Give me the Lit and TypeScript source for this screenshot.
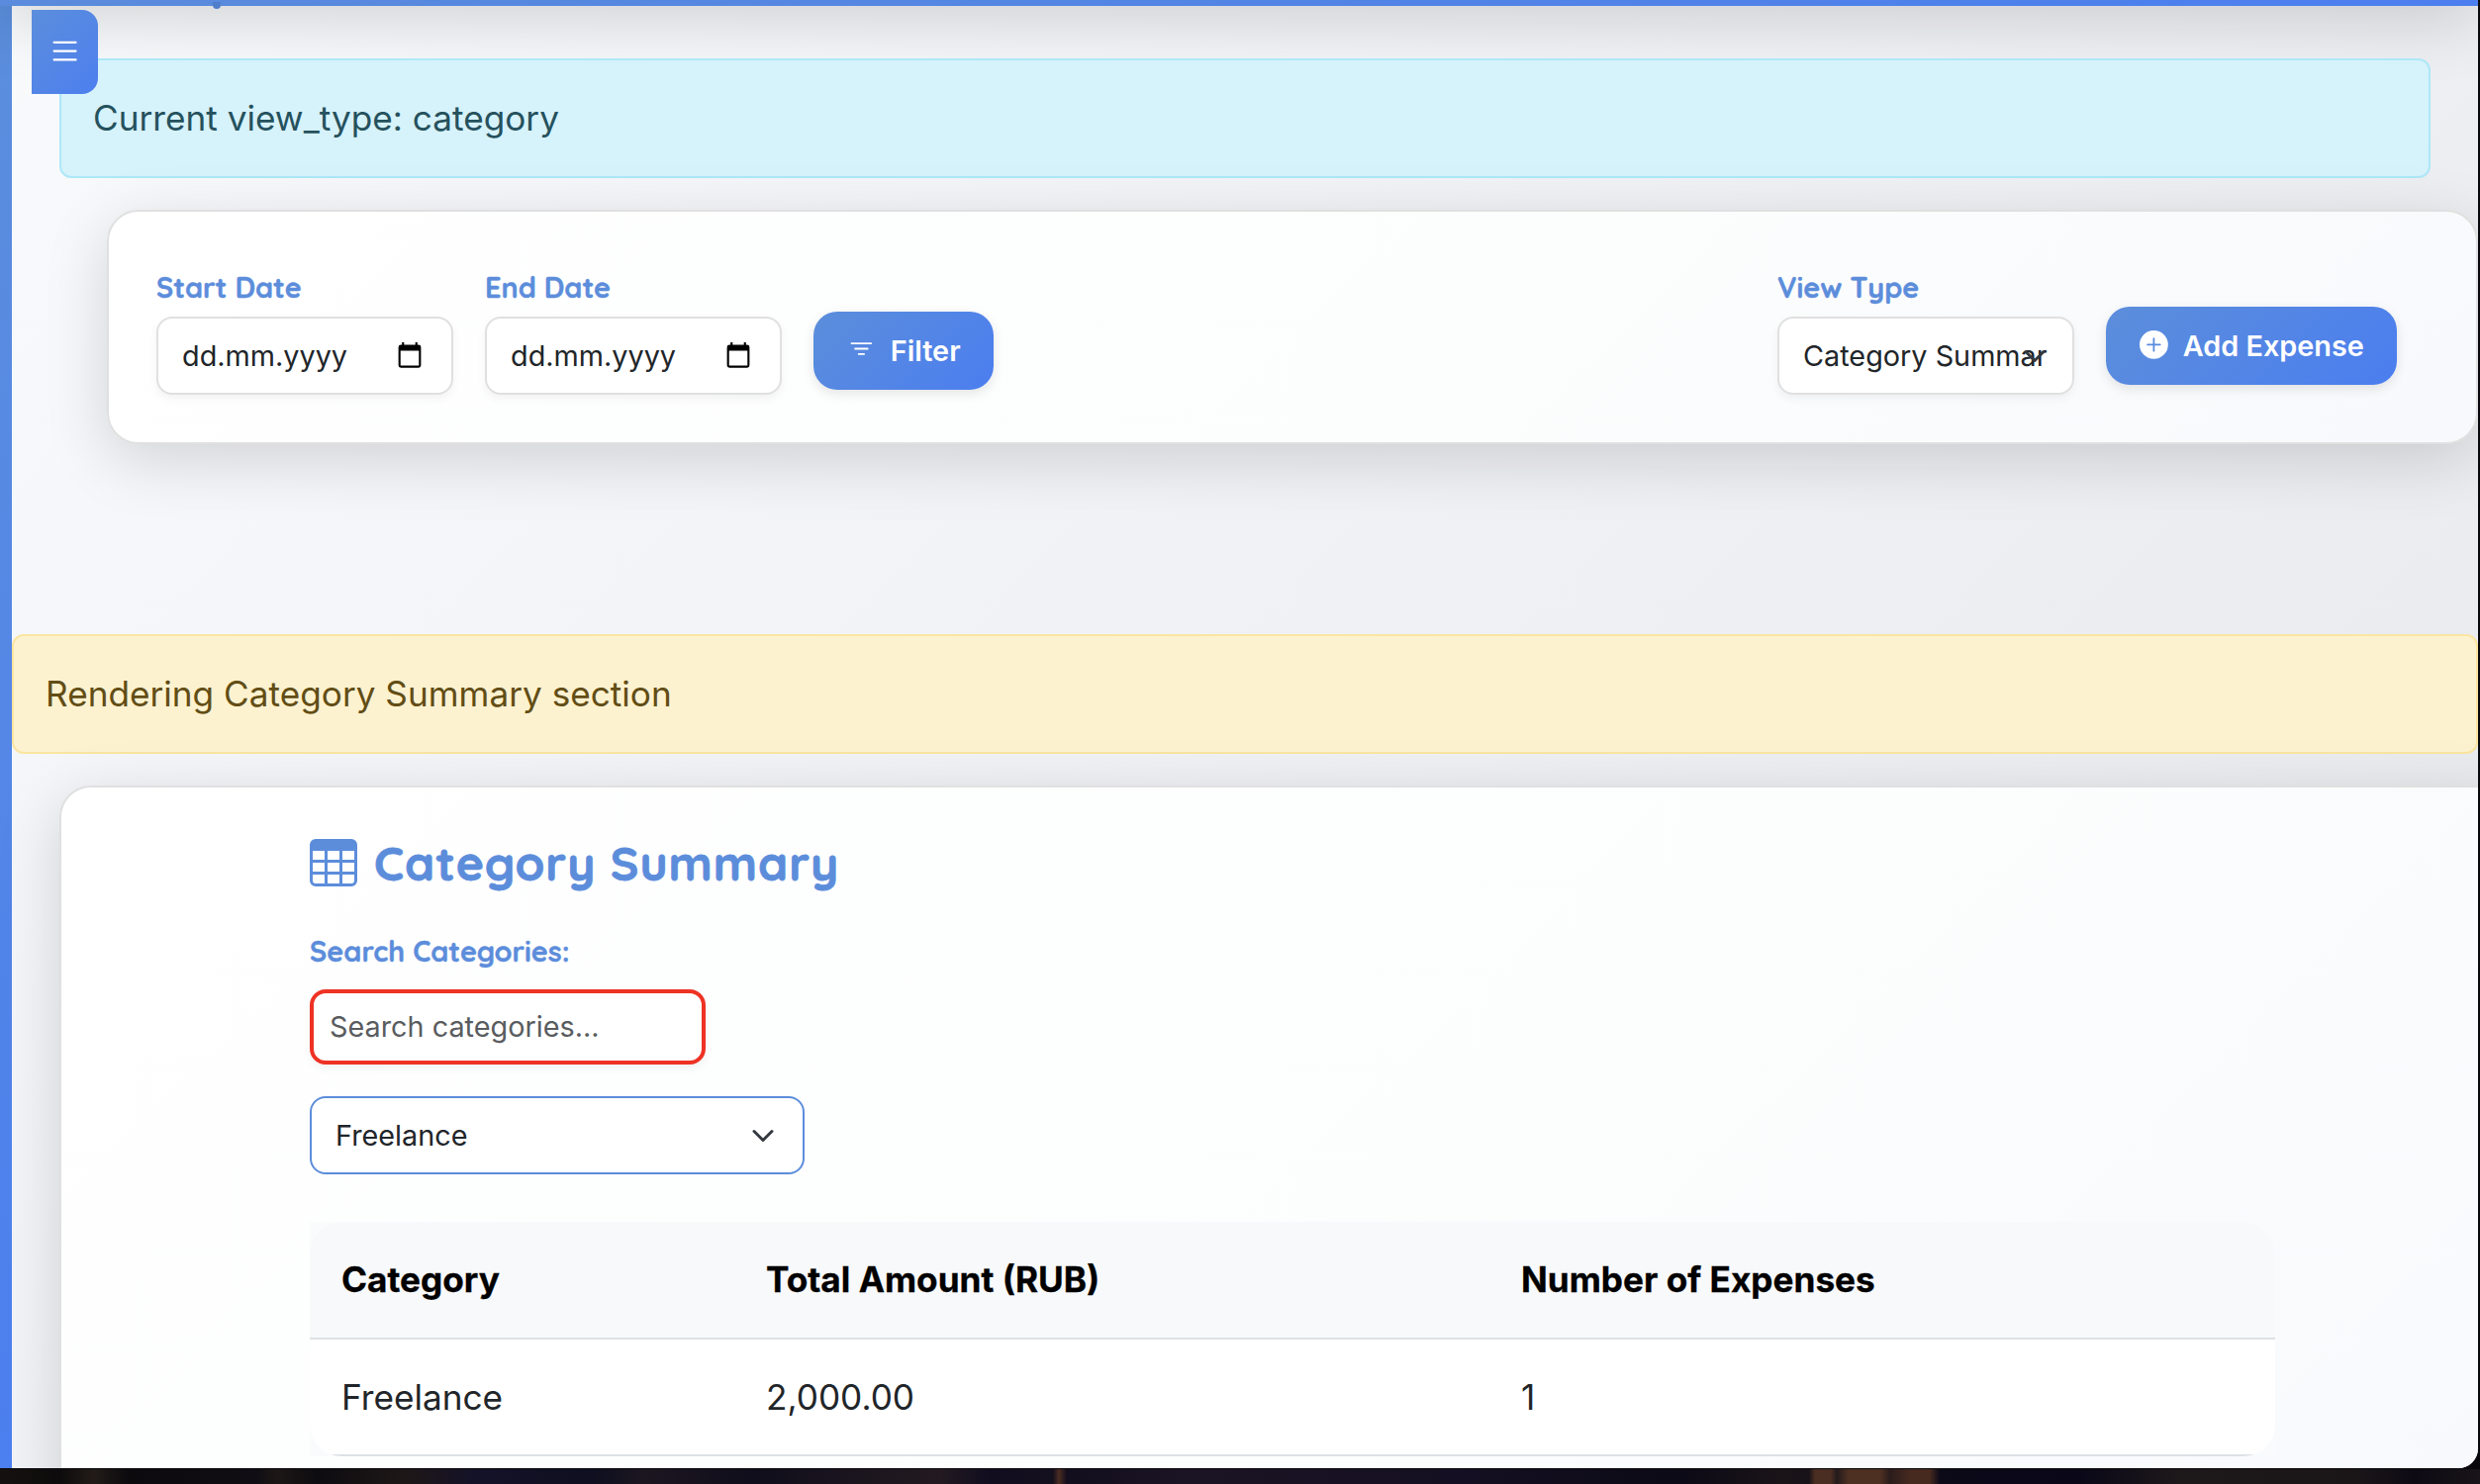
import { LitElement, html, css, svg } from "lit";
import { customElement, property } from "lit/decorators.js";

const ICONS: Record<string, unknown> = {
  list: svg`<path fill="currentColor" d="M2.5 12a.5.5 0 0 1 .5-.5h10a.5.5 0 0 1 0 1H3a.5.5 0 0 1-.5-.5m0-4a.5.5 0 0 1 .5-.5h10a.5.5 0 0 1 0 1H3a.5.5 0 0 1-.5-.5m0-4a.5.5 0 0 1 .5-.5h10a.5.5 0 0 1 0 1H3a.5.5 0 0 1-.5-.5"/>`,
  filter: svg`<path fill="currentColor" d="M6 10.5a.5.5 0 0 1 .5-.5h3a.5.5 0 0 1 0 1h-3a.5.5 0 0 1-.5-.5m-2-3a.5.5 0 0 1 .5-.5h7a.5.5 0 0 1 0 1h-7a.5.5 0 0 1-.5-.5m-2-3a.5.5 0 0 1 .5-.5h11a.5.5 0 0 1 0 1h-11a.5.5 0 0 1-.5-.5"/>`,
  plus: svg`<path fill="currentColor" d="M16 8A8 8 0 1 1 0 8a8 8 0 0 1 16 0M8.5 4.5a.5.5 0 0 0-1 0v3h-3a.5.5 0 0 0 0 1h3v3a.5.5 0 0 0 1 0v-3h3a.5.5 0 0 0 0-1h-3z"/>`,
  table: svg`<path fill="currentColor" d="M0 2a2 2 0 0 1 2-2h12a2 2 0 0 1 2 2v12a2 2 0 0 1-2 2H2a2 2 0 0 1-2-2zm15 2h-4v3h4zm0 4h-4v3h4zm0 4h-4v3h3a1 1 0 0 0 1-1zm-5 3v-3H6v3zm-5 0v-3H1v2a1 1 0 0 0 1 1zm-4-4h4V8H1zm0-4h4V4H1zm5-3v3h4V4zm4 4H6v3h4z"/>`,
  chevron: svg`<path fill="none" stroke="#343a40" stroke-width="2" stroke-linecap="round" stroke-linejoin="round" d="m2 5 6 6 6-6"/>`,
  calendar: svg`<path fill="#000" fill-rule="evenodd" d="M3.200 0h1.300v1.600h7V0h1.300v1.600h.700A1.500 1.500 0 0 1 15 3.100v11.200a1.500 1.500 0 0 1-1.500 1.500h-11A1.500 1.500 0 0 1 1 14.300V3.100A1.500 1.500 0 0 1 2.500 1.600h.700zM2.300 5.200v9.300h11.400V5.200z"/>`,
};

@customElement("ui-icon")
class UiIcon extends LitElement {
  static styles = css`
    :host { display: block; flex: none; }
    svg { display: block; width: 100%; height: 100%; }
  `;
  @property() name = "";
  render() {
    return html`<svg viewBox="0 0 16 16">${ICONS[this.name]}</svg>`;
  }
}

@customElement("app-root")
class AppRoot extends LitElement {
  static styles = css`
    :host {
      display: block;
      width: 2506px;
      height: 1500px;
      overflow: hidden;
      position: relative;
      font-family: Inter, "Liberation Sans", sans-serif;
      font-size: 35.2px;
      line-height: 52.8px;
      color: #212529;
      background:
        linear-gradient(90deg, transparent 1828px, #4a2e22 1834px 1850px, #241a1c 1856px, #4d3022 1868px 1900px, #2a1c1c 1910px, #46291f 1930px 1950px, transparent 1960px) 0 1485px / 100% 15px no-repeat,
        linear-gradient(90deg, #15110f 0, #0d0b0c 60px, #221b18 95px, #0c0a0d 130px, #100e14 260px, #1d1716 280px, #0d0c10 320px, #1e1717 410px, #141228 480px, #0e0f20 600px, #1c1620 650px, #100e1c 760px, #231a20 950px, #110d20 1000px, #14101e 1064px, #4a2c22 1070px, #120e1d 1078px, #1b1424 1200px, #140f22 1480px, #0c0a16 1700px, #1a1418 1800px, #0b0918 1980px, #0a0818 2100px, #1d181a 2200px, #1a1618 2380px, #0d0a14 2440px, #181418 2506px) 0 1485px / 100% 15px no-repeat,
        #08070b;
    }
    .window {
      width: 2504px;
      height: 1484px;
      overflow: hidden;
      border-bottom-right-radius: 20px;
      display: grid;
      grid-template: 6px 1478px / 12px 2492px;
      background: linear-gradient(135deg, #f8fafc, #f0f1f5 50%, #e7e8ec);
      position: relative;
    }
    .topbar {
      grid-column: 1 / 3;
      background: linear-gradient(90deg, #5a8bdc, #5385e4 45%, #4c7eef);
      position: relative;
    }
    .topbar::before {
      content: "";
      position: absolute;
      left: 0;
      right: 0;
      bottom: 0;
      height: 160px;
      background: inherit;
      box-shadow: 0 16px 64px rgba(0, 0, 0, 0.15);
    }
    .descender {
      position: absolute;
      left: 215px;
      top: 2px;
      width: 8px;
      height: 7px;
      border-radius: 0 0 4px 4px;
      background: #4f7ecb;
    }
    .rail { background: linear-gradient(#5b8edc, #4d80f0); }
    .page { display: flex; flex-direction: column; align-items: flex-start; min-width: 0; }
    .menu {
      position: absolute;
      z-index: 3;
      left: 32px;
      top: 10px;
      box-sizing: border-box;
      width: 67px;
      height: 85px;
      padding: 24px 16px;
      border-radius: 0 16px 16px 0;
      background: linear-gradient(135deg, #5b8edc, #4d7fef);
      color: #fff;
    }
    .menu ui-icon { width: 35.2px; height: 35.2px; }
    .alert {
      box-sizing: border-box;
      height: 121px;
      padding: 32px;
      border: 2px solid;
      border-radius: 12px;
      flex: none;
      position: relative;
    }
    .info { width: 2396px; margin: 53px 0 0 48px; background: #d6f2fb; border-color: #ade8f7; color: #25515d; }
    .warning { width: 2492px; margin-top: 192px; background: #fdf2d0; border-color: #fbe5a0; color: #624d15; }
    .card {
      box-sizing: border-box;
      border: 2px solid #e0e0e0;
      border-radius: 32px;
      background: linear-gradient(135deg, #ffffff, #fcfdfd 60%, #f8f9fc);
      flex: none;
      position: relative;
    }
    .filters {
      width: 2396px;
      height: 237px;
      margin: 32px 0 0 96px;
      padding: 48px;
      box-shadow: 0 16px 64px rgba(0, 0, 0, 0.15);
      display: flex;
      align-items: flex-end;
      gap: 32px;
    }
    .label {
      font: 700 28.8px/43.2px Quicksand, Lato, sans-serif;
      color: #5c8ddb;
      -webkit-text-stroke: 0.4px #5c8ddb;
    }
    .field { width: 300px; display: flex; flex-direction: column; gap: 8px; }
    .control {
      box-sizing: border-box;
      height: 79px;
      border: 2px solid #e0e0e0;
      border-radius: 16px;
      background: #fff;
      box-shadow: 0 4px 10px rgba(0, 0, 0, 0.05);
      font-size: 28.8px;
      line-height: 43px;
      padding: 0 29px 0 24px;
      display: flex;
      align-items: center;
      justify-content: space-between;
      white-space: nowrap;
    }
    .cal { width: 26px; height: 26px; margin-bottom: 2px; }
    .select { position: relative; padding: 0 24px; }
    .chev { width: 24px; height: 24px; }
    .over { position: absolute; right: 26px; top: 26px; }
    .btn {
      box-sizing: border-box;
      height: 79px;
      border-radius: 24px;
      background: linear-gradient(135deg, #5c8edb, #4b7eef);
      color: #fff;
      font-size: 28.8px;
      font-weight: 600;
      padding: 2px 0 0 34px;
      display: flex;
      align-items: center;
      gap: 15px;
      white-space: nowrap;
      box-shadow: 0 4px 12px rgba(0, 0, 0, 0.1);
    }
    .btn ui-icon { width: 28.8px; height: 28.8px; margin-bottom: 4px; }
    .apply { width: 182px; margin-bottom: 5px; }
    .add { width: 294px; margin: 0 32px 10px 0; }
    .spacer { flex: 1; }
    .summary {
      width: 2492px;
      height: 760px;
      margin: 32px 0 0 48px;
      padding: 48px 251px 0;
      box-shadow: 0 16px 64px rgba(0, 0, 0, 0.15);
    }
    .heading {
      margin: 0;
      display: flex;
      align-items: center;
      gap: 17px;
      height: 56px;
      font: 700 48px/56px Quicksand, Lato, sans-serif;
      letter-spacing: 1px;
      color: #5c8ddb;
      -webkit-text-stroke: 0.8px #5c8ddb;
      white-space: nowrap;
    }
    .heading ui-icon { width: 48px; height: 48px; }
    .search-label { margin-top: 40px; }
    .search {
      width: 400px;
      height: 76px;
      margin-top: 17px;
      padding: 0 16px 2px;
      border: 4px solid #ee3224;
      color: #595c5f;
    }
    .category {
      width: 500px;
      margin-top: 32px;
      padding: 0 28px 0 24px;
      border-color: #5c8ddb;
      box-shadow: none;
    }
    .table { width: 1986px; margin-top: 48px; background: #fafbfc; }
    .rows { border-radius: 32px; overflow: hidden; background: #fff; }
    .row {
      display: grid;
      grid-template-columns: 429px 763px 1fr;
      height: 116px;
      align-items: center;
      border-bottom: 2px solid #dde1e5;
    }
    .row span { padding-left: 32px; }
    .head { height: 117px; background: #f8f9fb; font-weight: 700; color: #000; -webkit-text-stroke: 0.3px #000; }
  `;

  private records = [{ category: "Freelance", total: "2,000.00", count: 1 }];

  private dateField(label: string) {
    return html`<div class="field">
      <div class="label">${label}</div>
      <div class="control"><span>dd.mm.yyyy</span><ui-icon class="cal" name="calendar"></ui-icon></div>
    </div>`;
  }

  render() {
    return html`
      <div class="window">
        <div class="topbar"><div class="descender"></div></div>
        <div class="rail"></div>
        <div class="page">
          <div class="alert info">Current view_type: category</div>
          <div class="card filters">
            ${this.dateField("Start Date")} ${this.dateField("End Date")}
            <div class="btn apply"><ui-icon name="filter"></ui-icon>Filter</div>
            <div class="spacer"></div>
            <div class="field">
              <div class="label">View Type</div>
              <div class="control select">
                <span>Category Summar</span>
                <ui-icon class="chev over" name="chevron"></ui-icon>
              </div>
            </div>
            <div class="btn add"><ui-icon name="plus"></ui-icon>Add Expense</div>
          </div>
          <div class="alert warning">Rendering Category Summary section</div>
          <div class="card summary">
            <h2 class="heading"><ui-icon name="table"></ui-icon>Category Summary</h2>
            <div class="label search-label">Search Categories:</div>
            <div class="control search">Search categories...</div>
            <div class="control category">Freelance<ui-icon class="chev" name="chevron"></ui-icon></div>
            <div class="table">
              <div class="rows">
                <div class="row head"><span>Category</span><span>Total Amount (RUB)</span><span>Number of Expenses</span></div>
                ${this.records.map(
                  (r) => html`<div class="row"><span>${r.category}</span><span>${r.total}</span><span>${r.count}</span></div>`
                )}
              </div>
            </div>
          </div>
        </div>
        <div class="menu"><ui-icon name="list"></ui-icon></div>
      </div>
    `;
  }
}
